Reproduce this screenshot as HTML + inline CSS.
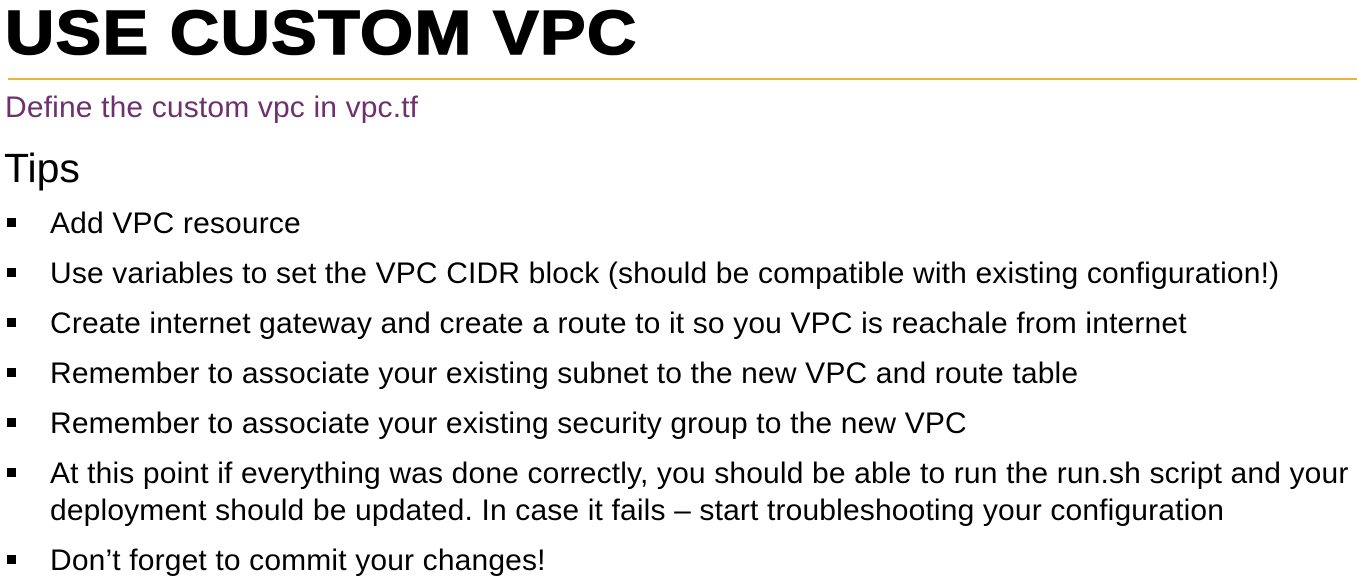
<!DOCTYPE html>
<html><head><meta charset="utf-8"><style>
body{margin:0;width:1357px;height:581px;background:#fff;overflow:hidden;position:relative;font-family:"Liberation Sans",Arial,sans-serif;color:#000}
.a{position:absolute;line-height:1;white-space:nowrap}
.t{left:5px;top:3px;font-size:62px;font-weight:bold;transform:scaleX(1.1);transform-origin:0 0;-webkit-text-stroke:1.6px #000;letter-spacing:1.3px}
.hr{position:absolute;left:8px;top:78px;width:1349px;height:2px;background:#efb33a}
.s{left:5px;top:93px;font-size:30px;color:#70306e;letter-spacing:0.15px}
.tips{left:4px;top:148px;font-size:41px}
.i{left:50px;font-size:30px;letter-spacing:0.15px}
.b{position:absolute;left:7px;width:9px;height:9px;background:#000}
</style></head><body>
<div class="a t">USE CUSTOM VPC</div>
<div class="hr"></div>
<div class="a s">Define the custom vpc in vpc.tf</div>
<div class="a tips">Tips</div>
<div class="b" style="top:218px"></div><div class="a i" style="top:208.6px">Add VPC resource</div>
<div class="b" style="top:268px"></div><div class="a i" style="top:258.6px">Use variables to set the VPC CIDR block (should be compatible with existing configuration!)</div>
<div class="b" style="top:318px"></div><div class="a i" style="top:308.6px">Create internet gateway and create a route to it so you VPC is reachale from internet</div>
<div class="b" style="top:368px"></div><div class="a i" style="top:358.6px">Remember to associate your existing subnet to the new VPC and route table</div>
<div class="b" style="top:418px"></div><div class="a i" style="top:408.6px">Remember to associate your existing security group to the new VPC</div>
<div class="b" style="top:468px"></div><div class="a i" style="top:458.6px">At this point if everything was done correctly, you should be able to run the run.sh script and your</div>
<div class="a i" style="top:495.6px">deployment should be updated. In case it fails – start troubleshooting your configuration</div>
<div class="b" style="top:555px"></div><div class="a i" style="top:545.6px">Don’t forget to commit your changes!</div>
</body></html>
